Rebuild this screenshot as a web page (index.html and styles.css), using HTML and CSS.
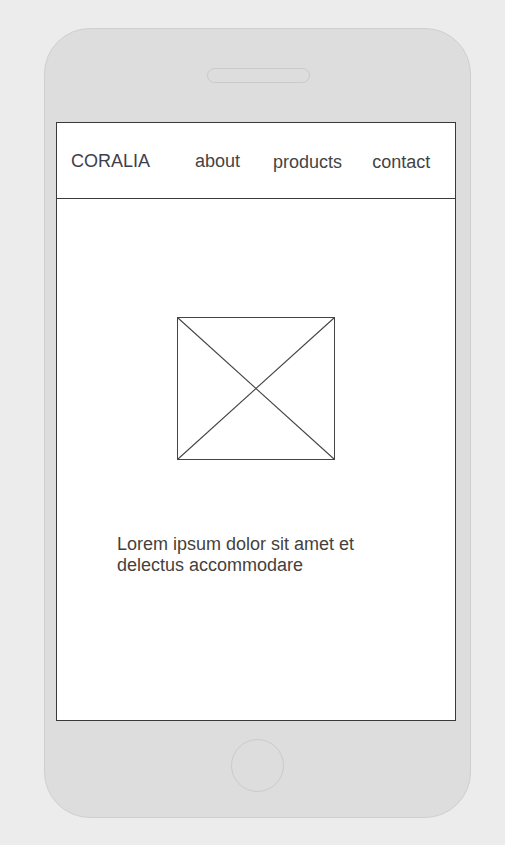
FILE: index.html
```html
<!DOCTYPE html>
<html>
<head>
<meta charset="utf-8">
<link rel="stylesheet" href="styles.css">
</head>
<body>
<div class="phone">
  <div class="speaker"></div>
  <div class="screen">
    <header class="header">
      <span class="logo">CORALIA</span>
      <nav class="nav">
        <span class="nav-about">about</span>
        <span class="nav-products">products</span>
        <span class="nav-contact">contact</span>
      </nav>
    </header>
    <main class="content">
      <svg class="placeholder" width="158" height="143" viewBox="0 0 158 143">
        <rect x="0.5" y="0.5" width="157" height="142" fill="#fff" stroke="#444" stroke-width="1"/>
        <line x1="1" y1="1" x2="157" y2="142" stroke="#444" stroke-width="1.1"/>
        <line x1="157" y1="1" x2="1" y2="142" stroke="#444" stroke-width="1.1"/>
      </svg>
      <p class="text">Lorem ipsum dolor sit amet et<br>delectus accommodare</p>
    </main>
  </div>
  <div class="home"></div>
</div>
</body>
</html>
```
FILE: styles.css
```css
html, body {
  margin: 0;
  padding: 0;
  background: #ececec;
}
body {
  padding-top: 28px;
  padding-left: 44px;
  font-family: "Liberation Sans", Arial, sans-serif;
  color: #444;
}
.phone {
  box-sizing: border-box;
  width: 427px;
  height: 790px;
  background: #dddddd;
  border: 1px solid #cfcfcf;
  border-radius: 46px;
  display: flex;
  flex-direction: column;
}
.speaker {
  box-sizing: border-box;
  width: 103px;
  height: 15px;
  margin: 39px 0 0 162px;
  border: 1px solid #cacaca;
  border-radius: 8px;
}
.screen {
  box-sizing: border-box;
  width: 400px;
  height: 599px;
  margin: 39px 0 0 11px;
  background: #fff;
  border: 1px solid #3a3a3a;
  display: flex;
  flex-direction: column;
}
.header {
  box-sizing: border-box;
  height: 76px;
  border-bottom: 1px solid #3a3a3a;
  display: flex;
  align-items: center;
  padding-left: 14px;
  padding-top: 2px;
  font-size: 18px;
}
.logo {
  color: #3e3e4a;
}
.nav {
  display: flex;
  align-items: center;
  color: #444;
}
.nav-about { margin-left: 45px; }
.nav-products { margin-left: 33px; padding-top: 2px; }
.nav-contact { margin-left: 30px; padding-top: 2px; }
.content {
  display: flex;
  flex-direction: column;
  align-items: center;
}
.placeholder {
  display: block;
  margin-top: 118px;
  margin-left: 0;
}
.text {
  align-self: flex-start;
  margin: 74px 0 0 60px;
  font-size: 18px;
  line-height: 21px;
  color: #463f3c;
}
.home {
  box-sizing: border-box;
  width: 53px;
  height: 53px;
  margin: 18px 0 0 186px;
  border: 1px solid #cacaca;
  border-radius: 50%;
}
```
